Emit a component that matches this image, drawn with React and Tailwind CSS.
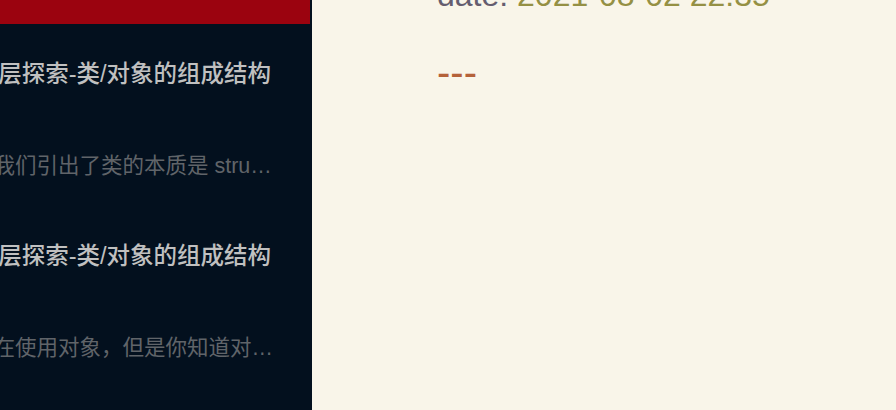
const notes = [
  {
    id: 1,
    title: "iOS 底层探索-类/对象的组成结构",
    excerpt: "上一篇我们引出了类的本质是 struct objc_class 结构体",
  },
  {
    id: 2,
    title: "iOS 底层探索-类/对象的组成结构",
    excerpt: "每天都在使用对象，但是你知道对象在内存中是怎样的吗",
  },
];

function NoteRow({ note }) {
  return (
    <div className="h-[182px] overflow-hidden">
      <div className="-ml-[71px] pr-[30px] pt-[35px]">
        <div className="whitespace-nowrap text-[23.5px] leading-[30px] font-medium text-[#c0c0c0]">
          {note.title}
        </div>
        <div className="mt-[63px] truncate text-[21.5px] leading-[28px] text-[#606469]">
          {note.excerpt}
        </div>
      </div>
    </div>
  );
}

export default function App() {
  return (
    <div
      className="flex h-[410px] w-[896px] overflow-hidden"
      style={{ fontFamily: '"Liberation Sans", "Noto Sans CJK SC", sans-serif' }}
    >
      {/* note list */}
      <aside className="w-[312px] shrink-0 border-r-2 border-[#03101e] bg-[#03101e]">
        <div className="h-[24px] bg-[#9b030f]" />
        {notes.map((n) => (
          <NoteRow key={n.id} note={n} />
        ))}
      </aside>

      {/* editor */}
      <main className="flex-1 bg-[#f9f5e9] pl-[125px]">
        <div className="-mt-[25px] whitespace-nowrap text-[32px] leading-[40px]">
          <span className="text-[#655d6f]">date: </span>
          <span className="text-[#959044]">2021-08-02 22:35</span>
        </div>
        <div className="mt-[33px] text-[40px] leading-[48px] text-[#b5623a]">---</div>
      </main>
    </div>
  );
}
